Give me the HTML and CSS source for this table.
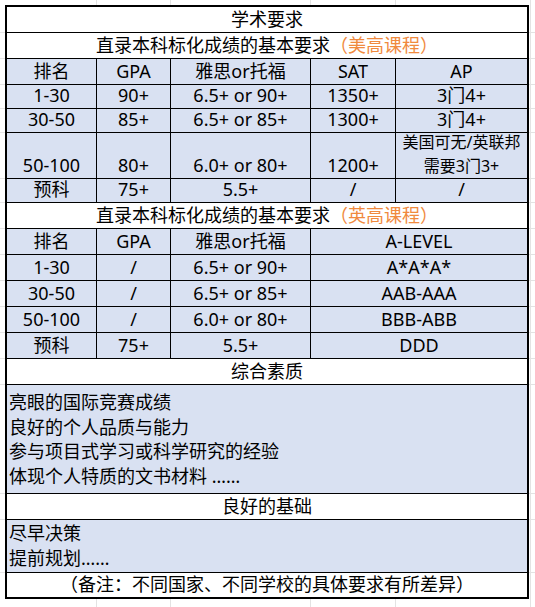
FILE: index.html
```html
<!DOCTYPE html>
<html lang="zh-CN">
<head>
<meta charset="utf-8">
<title>学术要求</title>
<link rel="stylesheet" href="styles.css">
</head>
<body>
<div class="sheet">
  <div class="c full w">学术要求</div>
  <div class="c full w">直录本科标化成绩的基本要求<span class="hl">（美高课程）</span></div>

  <div class="c b">排名</div><div class="c b">GPA</div><div class="c b">雅思or托福</div><div class="c b">SAT</div><div class="c b last">AP</div>
  <div class="c b">1-30</div><div class="c b">90+</div><div class="c b">6.5+ or 90+</div><div class="c b">1350+</div><div class="c b last">3门4+</div>
  <div class="c b">30-50</div><div class="c b">85+</div><div class="c b">6.5+ or 85+</div><div class="c b">1300+</div><div class="c b last">3门4+</div>
  <div class="c b">50-100</div><div class="c b">80+</div><div class="c b">6.0+ or 80+</div><div class="c b">1200+</div><div class="c b last small">美国可无/英联邦<br>需要3门3+</div>
  <div class="c b">预科</div><div class="c b">75+</div><div class="c b">5.5+</div><div class="c b">/</div><div class="c b last">/</div>

  <div class="c full w">直录本科标化成绩的基本要求<span class="hl">（英高课程）</span></div>
  <div class="c b">排名</div><div class="c b">GPA</div><div class="c b">雅思or托福</div><div class="c b span2">A-LEVEL</div>
  <div class="c b">1-30</div><div class="c b">/</div><div class="c b">6.5+ or 90+</div><div class="c b span2">A*A*A*</div>
  <div class="c b">30-50</div><div class="c b">/</div><div class="c b">6.5+ or 85+</div><div class="c b span2">AAB-AAA</div>
  <div class="c b">50-100</div><div class="c b">/</div><div class="c b">6.0+ or 80+</div><div class="c b span2">BBB-ABB</div>
  <div class="c b">预科</div><div class="c b">75+</div><div class="c b">5.5+</div><div class="c b span2">DDD</div>

  <div class="c full w">综合素质</div>
  <div class="c full b list list4">
    <div>亮眼的国际竞赛成绩</div>
    <div>良好的个人品质与能力</div>
    <div>参与项目式学习或科学研究的经验</div>
    <div>体现个人特质的文书材料 ……</div>
  </div>
  <div class="c full w">良好的基础</div>
  <div class="c full b list list2">
    <div>尽早决策</div>
    <div>提前规划……</div>
  </div>
  <div class="c full w end">（备注：不同国家、不同学校的具体要求有所差异）</div>
</div>
</body>
</html>
```
FILE: styles.css
```css
html, body {
  margin: 0;
  padding: 0;
}

body {
  width: 535px;
  height: 607px;
  padding: 5px 0 0 5px;
  box-sizing: border-box;
  font-family: "Noto Sans", "Noto Sans CJK SC", sans-serif;
  font-size: 18px;
  color: #000;
  background-color: #fff;
  background-image:
    linear-gradient(#e3e3e3, #e3e3e3),
    linear-gradient(#e3e3e3, #e3e3e3),
    linear-gradient(#e3e3e3, #e3e3e3),
    linear-gradient(#e3e3e3, #e3e3e3),
    linear-gradient(#e3e3e3, #e3e3e3),
    linear-gradient(#e3e3e3, #e3e3e3),
    linear-gradient(#e3e3e3, #e3e3e3),
    linear-gradient(#e3e3e3, #e3e3e3),
    linear-gradient(#e3e3e3, #e3e3e3),
    linear-gradient(#e3e3e3, #e3e3e3),
    linear-gradient(#e3e3e3, #e3e3e3),
    linear-gradient(#e3e3e3, #e3e3e3),
    linear-gradient(#e3e3e3, #e3e3e3),
    linear-gradient(#e3e3e3, #e3e3e3),
    linear-gradient(#e3e3e3, #e3e3e3),
    linear-gradient(#e3e3e3, #e3e3e3),
    linear-gradient(#e3e3e3, #e3e3e3),
    linear-gradient(#e3e3e3, #e3e3e3),
    linear-gradient(#e3e3e3, #e3e3e3),
    linear-gradient(#e3e3e3, #e3e3e3),
    linear-gradient(#e3e3e3, #e3e3e3),
    linear-gradient(#e3e3e3, #e3e3e3);
  background-repeat: no-repeat;
  background-size:
    1px 100%, 1px 100%, 1px 100%, 1px 100%, 1px 100%,
    100% 1px, 100% 1px, 100% 1px, 100% 1px, 100% 1px, 100% 1px,
    100% 1px, 100% 1px, 100% 1px, 100% 1px, 100% 1px, 100% 1px,
    100% 1px, 100% 1px, 100% 1px, 100% 1px, 100% 1px;
  background-position:
    96px 0, 170px 0, 310px 0, 395px 0, 530px 0,
    0 32px, 0 58px, 0 84px, 0 108px, 0 132px, 0 178px,
    0 202px, 0 228px, 0 254px, 0 280px, 0 306px, 0 332px,
    0 358px, 0 384px, 0 493px, 0 519px, 0 572px;
}

.sheet {
  width: 524px;
  box-sizing: border-box;
  border: 2px solid #000;
  display: grid;
  grid-template-columns: 90px 74px 140px 85px 131px;
  grid-template-rows: 26px 26px 26px 24px 24px 46px 24px 26px 26px 26px 26px 26px 26px 26px 109px 26px 53px 24px;
  background: #fff;
}

.c {
  box-sizing: border-box;
  border-right: 1px solid #000;
  border-bottom: 1px solid #000;
  display: flex;
  align-items: flex-end;
  justify-content: center;
  text-align: center;
  line-height: 20px;
  padding-bottom: 3px;
  white-space: nowrap;
}

.w {
  background: #fff;
}

.b {
  background: #d9e1f2;
}

.full {
  grid-column: 1 / -1;
  border-right: none;
}

.last {
  border-right: none;
}

.span2 {
  grid-column: 4 / 6;
  border-right: none;
}

.end {
  border-bottom: none;
}

.small {
  font-size: 16px;
  line-height: 24px;
  padding-bottom: 0;
}

.hl {
  color: #f08a3e;
}

.list {
  flex-direction: column;
  align-items: flex-start;
  justify-content: center;
  text-align: left;
  padding: 0 0 0 2px;
}

.list4 {
  line-height: 24.5px;
}

.list2 {
  line-height: 25px;
}
```
